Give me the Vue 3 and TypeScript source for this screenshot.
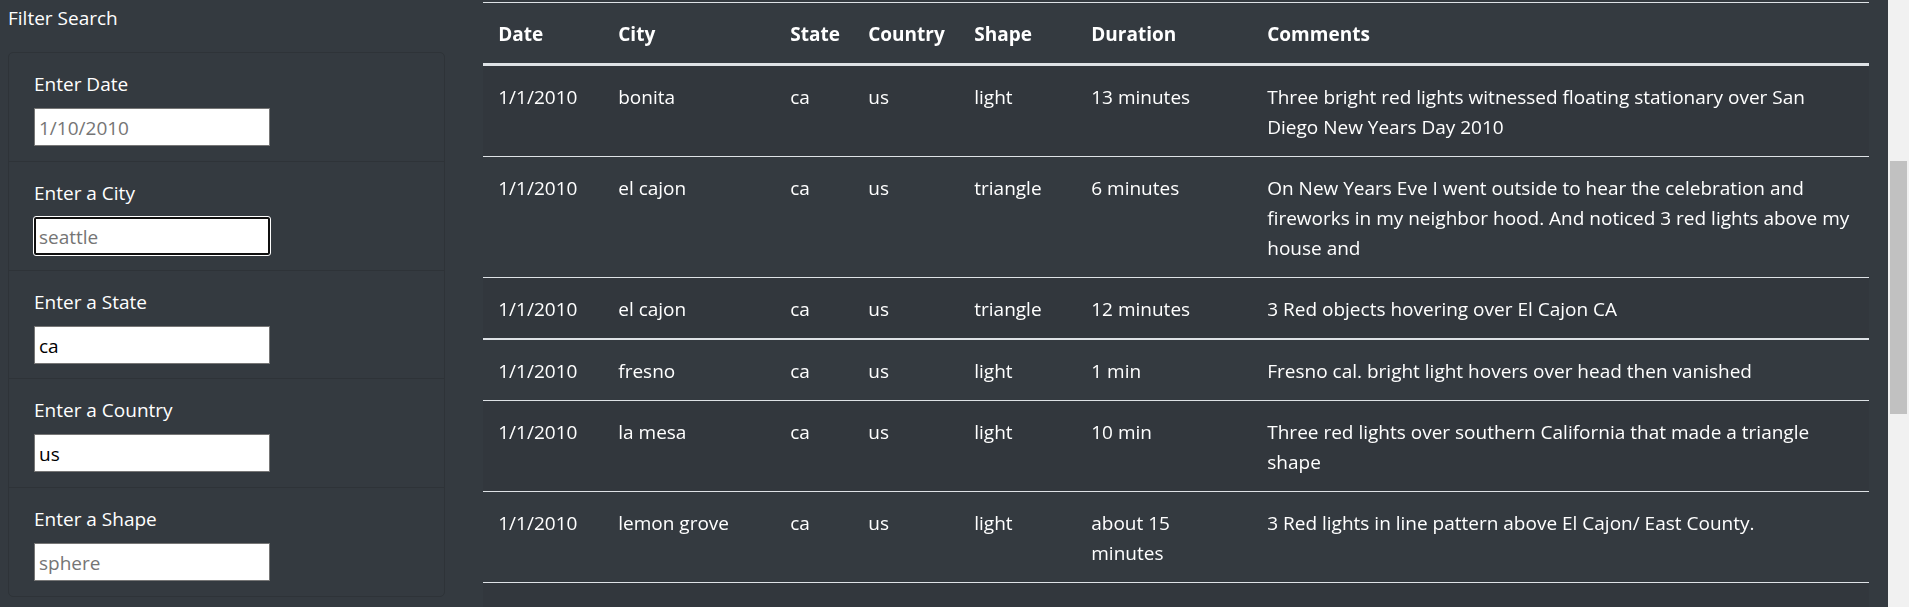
<script setup lang="ts">
import { nextTick, onMounted, reactive, ref } from 'vue'

interface Filter {
  id: string
  label: string
  placeholder: string
}

interface Sighting {
  date: string
  city: string
  state: string
  country: string
  shape: string
  duration: string
  comments: string
}

const filters: Filter[] = [
  { id: 'datetime', label: 'Enter Date', placeholder: '1/10/2010' },
  { id: 'city', label: 'Enter a City', placeholder: 'seattle' },
  { id: 'state', label: 'Enter a State', placeholder: 'ca' },
  { id: 'country', label: 'Enter a Country', placeholder: 'us' },
  { id: 'shape', label: 'Enter a Shape', placeholder: 'sphere' },
]

const values = reactive<Record<string, string>>({
  datetime: '',
  city: '',
  state: 'ca',
  country: 'us',
  shape: '',
})

const columns = ['Date', 'City', 'State', 'Country', 'Shape', 'Duration', 'Comments']

const sightings: Sighting[] = [
  { date: '1/1/2010', city: 'bonita', state: 'ca', country: 'us', shape: 'light', duration: '13 minutes', comments: 'Three bright red lights witnessed floating stationary over San Diego New Years Day 2010' },
  { date: '1/1/2010', city: 'el cajon', state: 'ca', country: 'us', shape: 'triangle', duration: '6 minutes', comments: 'On New Years Eve I went outside to hear the celebration and fireworks in my neighbor hood. And noticed 3 red lights above my house and' },
  { date: '1/1/2010', city: 'el cajon', state: 'ca', country: 'us', shape: 'triangle', duration: '12 minutes', comments: '3 Red objects hovering over El Cajon CA' },
  { date: '1/1/2010', city: 'fresno', state: 'ca', country: 'us', shape: 'light', duration: '1 min', comments: 'Fresno cal. bright light hovers over head then vanished' },
  { date: '1/1/2010', city: 'la mesa', state: 'ca', country: 'us', shape: 'light', duration: '10 min', comments: 'Three red lights over southern California that made a triangle shape' },
  { date: '1/1/2010', city: 'lemon grove', state: 'ca', country: 'us', shape: 'light', duration: 'about 15 minutes', comments: '3 Red lights in line pattern above El Cajon/ East County.' },
  { date: '1/1/2010', city: 'el cajon', state: 'ca', country: 'us', shape: 'formation', duration: '15 minutes', comments: 'Three red lights over downtown area' },
]

const form = ref<HTMLFormElement | null>(null)

onMounted(async () => {
  await nextTick()
  form.value?.querySelector<HTMLInputElement>('#city')?.focus()
})
</script>

<template>
  <div class="page">
    <main class="content">
      <aside class="sidebar">
        <p class="title">Filter Search</p>
        <form ref="form" class="filters" @submit.prevent>
          <div v-for="f in filters" :key="f.id" class="filter">
            <label :for="f.id">{{ f.label }}</label>
            <input :id="f.id" v-model="values[f.id]" type="text" :placeholder="f.placeholder" autocomplete="off" />
          </div>
        </form>
      </aside>
      <section class="results">
        <table>
          <colgroup>
            <col v-for="c in columns" :key="c" :class="'col-' + c.toLowerCase()" />
          </colgroup>
          <thead>
            <tr>
              <th v-for="c in columns" :key="c" scope="col">{{ c }}</th>
            </tr>
          </thead>
          <tbody>
            <tr v-for="(s, i) in sightings" :key="i">
              <td>{{ s.date }}</td>
              <td>{{ s.city }}</td>
              <td>{{ s.state }}</td>
              <td>{{ s.country }}</td>
              <td>{{ s.shape }}</td>
              <td>{{ s.duration }}</td>
              <td>{{ s.comments }}</td>
            </tr>
          </tbody>
        </table>
      </section>
    </main>
    <div class="scrollbar" aria-hidden="true"><div class="thumb"></div></div>
  </div>
</template>

<style>
html,
body {
  background: #343a40;
  overflow: hidden;
}
</style>

<style scoped>
.page {
  display: flex;
  height: 100vh;
  overflow: hidden;
  background: #343a40;
  color: #fff;
  font-family: "Segoe UI", "Open Sans", "Noto Sans", sans-serif;
  font-size: 19px;
  line-height: 30px;
}

.page * {
  box-sizing: border-box;
}

.content {
  flex: 1;
  min-width: 0;
  display: grid;
  grid-template-columns: 25% 1fr;
  padding-right: 19px;
}

.sidebar {
  padding: 3px 22px 0 8px;
}

.title {
  margin: 0 0 19px;
}

.filters {
  border: 1px solid #2e3338;
  border-radius: 5px;
}

.filter {
  height: 109px;
  padding: 16px 25px;
}

.filter:first-child,
.filter:nth-child(3) {
  height: 108px;
}

.filter + .filter {
  border-top: 1px solid #2e3338;
}

.filter label {
  display: block;
  margin-bottom: 9px;
}

.filter input {
  display: block;
  width: 236px;
  height: 38px;
  padding: 2px 4px 1px;
  border: 1px solid #767676;
  background: #fff;
  color: #000;
  font: inherit;
}

.filter input::placeholder {
  color: #757575;
}

.filter input:focus {
  outline: 1px solid #fff;
  border: 2px solid #101010;
  padding: 1px 3px 0;
  border-radius: 2px;
}

.results {
  padding: 2px 0 0 16px;
  overflow: hidden;
}

table {
  width: 100%;
  table-layout: fixed;
  border-collapse: separate;
  border-spacing: 0;
}

.col-date { width: 120px; }
.col-city { width: 172px; }
.col-state { width: 78px; }
.col-country { width: 106px; }
.col-shape { width: 117px; }
.col-duration { width: 176px; }

th,
td {
  padding: 16px 15px 14px;
  text-align: left;
  vertical-align: top;
  border-top: 1px solid #dee2e6;
}

th {
  font-weight: 700;
  border-bottom: 3px solid #dee2e6;
}

tbody tr:first-child td {
  border-top: 0;
}

tbody tr:nth-child(4) td {
  border-top-width: 2px;
}

tbody tr:nth-child(odd) {
  background: #32373d;
}

.scrollbar {
  width: 21px;
  padding: 161px 2px 0;
  background: #f1f1f1;
}

.thumb {
  height: 253px;
  background: #c1c1c1;
}
</style>
